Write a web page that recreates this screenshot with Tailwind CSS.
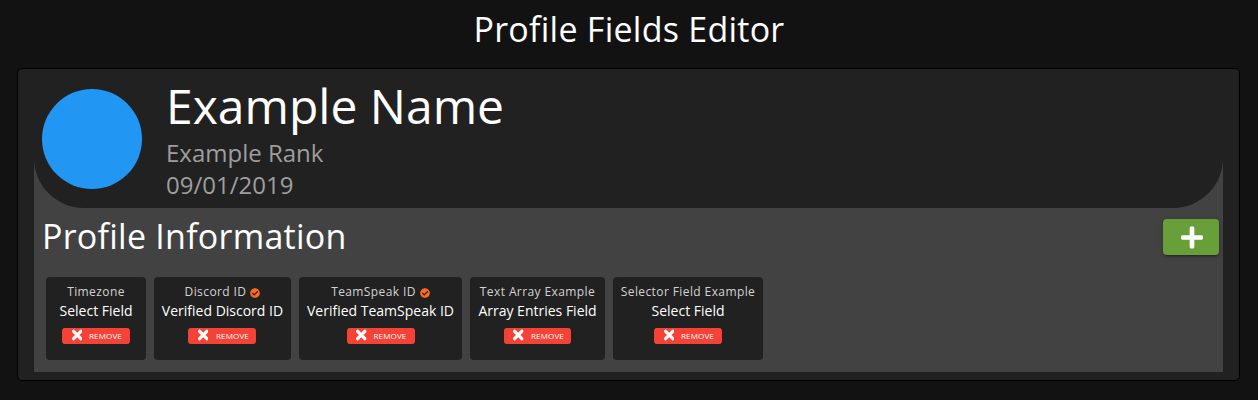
<!DOCTYPE html>
<html lang="en"><head><meta charset="utf-8"><title>Profile Fields Editor</title>
<script src="https://cdn.jsdelivr.net/npm/@tailwindcss/browser@4"></script></head>
<body class="h-[400px] overflow-hidden bg-[#121212] px-[17px] pt-[9px] font-['Open_Sans',sans-serif] text-white">
<svg class="hidden">
<symbol id="times" viewBox="0 0 352 512"><path stroke="white" stroke-width="18" d="M242.72 256l100.07-100.07c12.28-12.28 12.28-32.19 0-44.48l-22.24-22.24c-12.28-12.28-32.19-12.28-44.48 0L176 189.28 75.93 89.21c-12.28-12.28-32.19-12.28-44.48 0L9.21 111.45c-12.28 12.28-12.28 32.19 0 44.48L109.28 256 9.21 356.07c-12.28 12.28-12.28 32.19 0 44.48l22.24 22.24c12.28 12.28 32.2 12.28 44.48 0L176 322.72l100.07 100.07c12.28 12.28 32.2 12.28 44.48 0l22.24-22.24c12.28-12.28 12.28-32.19 0-44.48L242.72 256z"/></symbol>
<symbol id="check" viewBox="0 0 512 512"><path d="M504 256c0 137-111 248-248 248S8 393 8 256 119 8 256 8s248 111 248 248zM227.3 387.300l184-184c6.200-6.200 6.200-16.400 0-22.600l-22.600-22.600c-6.200-6.200-16.400-6.200-22.600 0L216 308.100l-70.100-70.100c-6.200-6.200-16.400-6.200-22.600 0l-22.600 22.600c-6.200 6.200-6.200 16.400 0 22.600l104 104c6.200 6.200 16.400 6.200 22.600 0z"/></symbol>
</svg>
<h1 class="h-10 text-center text-[34px] leading-10 tracking-[0.25px]">Profile Fields Editor</h1>
<main class="mt-[19px] h-[313px] w-[1223px] rounded-[5px] border border-black bg-[#212121] p-4">
<div class="h-[287px] w-[1189px] bg-[#424242]">
<header class="flex h-[123px] rounded-b-[50px] bg-[#212121] pl-2 pt-1">
<div class="size-[100px] shrink-0 rounded-full bg-[#2196f3]"></div>
<div class="ml-6 -mt-[7px]">
<h2 class="h-12 whitespace-nowrap text-[48px] leading-[48px]">Example Name</h2>
<div class="mt-[7px] text-2xl leading-8 text-[#9e9e9e]">Example Rank</div>
<div class="text-2xl leading-8 text-[#9e9e9e]">09/01/2019</div>
</div>
</header>
<div class="flex h-[69px] justify-between pl-2 pr-1 pt-2">
<h2 class="text-[34px] leading-10 tracking-[0.25px]">Profile Information</h2>
<button class="mt-[3px] flex h-9 w-14 items-center justify-center rounded bg-[#689f38] pl-px shadow-[0_3px_1px_-2px_rgba(0,0,0,.2),0_2px_2px_rgba(0,0,0,.14),0_1px_5px_rgba(0,0,0,.12)]" aria-label="Add">
<svg class="h-[25px] w-[22px]" viewBox="0 0 448 512" fill="white"><path d="M416 208H272V64c0-17.670-14.330-32-32-32h-32c-17.670 0-32 14.330-32 32v144H32c-17.670 0-32 14.330-32 32v32c0 17.670 14.330 32 32 32h144v144c0 17.670 14.330 32 32 32h32c17.670 0 32-14.330 32-32V304h144c17.670 0 32-14.330 32-32v-32c0-17.670-14.330-32-32-32z"/></svg></button>
</div>
<div class="flex gap-2 pl-3">
<section class="flex h-[83px] w-[100px] flex-col items-center rounded bg-[#212121] pt-[5px] whitespace-nowrap">
<div class="text-xs leading-5 tracking-[0.4px] text-[#d3d3d3]">Timezone</div>
<div class="text-sm leading-[18px]">Select Field</div>
<button class="mt-2 flex h-4 w-[68px] items-center rounded-[3px] bg-[#f44336] pl-[9.5px] text-[8px] font-medium"><svg class="mb-0.5 h-4 w-[10.5px]" fill="white"><use href="#times"/></svg><span class="ml-[7px] tracking-[0.15px]">REMOVE</span></button>
</section>
<section class="flex h-[83px] w-[137px] flex-col items-center rounded bg-[#212121] pt-[5px] whitespace-nowrap">
<div class="flex items-center gap-1 text-xs leading-5 tracking-[0.4px] text-[#d3d3d3]">Discord ID<svg class="mt-0.5 size-2.5" fill="#ff6a20"><use href="#check"/></svg></div>
<div class="text-sm leading-[18px]">Verified Discord ID</div>
<button class="mt-2 mr-px flex h-4 w-[68px] items-center rounded-[3px] bg-[#f44336] pl-[9.5px] text-[8px] font-medium"><svg class="mb-0.5 h-4 w-[10.5px]" fill="white"><use href="#times"/></svg><span class="ml-2 tracking-[0.15px]">REMOVE</span></button>
</section>
<section class="flex h-[83px] w-[163px] flex-col items-center rounded bg-[#212121] pt-[5px] whitespace-nowrap">
<div class="flex items-center gap-1 text-xs leading-5 tracking-[0.4px] text-[#d3d3d3]">TeamSpeak ID<svg class="mt-0.5 size-2.5" fill="#ff6a20"><use href="#check"/></svg></div>
<div class="text-sm leading-[18px]">Verified TeamSpeak ID</div>
<button class="mt-2 flex h-4 w-[68px] items-center rounded-[3px] bg-[#f44336] pl-[9.5px] text-[8px] font-medium"><svg class="mb-0.5 h-4 w-[10.5px]" fill="white"><use href="#times"/></svg><span class="ml-[7px] tracking-[0.15px]">REMOVE</span></button>
</section>
<section class="flex h-[83px] w-[135px] flex-col items-center rounded bg-[#212121] pt-[5px] whitespace-nowrap">
<div class="text-xs leading-5 tracking-[0.4px] text-[#d3d3d3]">Text Array Example</div>
<div class="text-sm leading-[18px]">Array Entries Field</div>
<button class="mt-2 flex h-4 w-[67px] items-center rounded-[3px] bg-[#f44336] pl-[9px] text-[8px] font-medium"><svg class="mb-0.5 h-4 w-[10.5px]" fill="white"><use href="#times"/></svg><span class="ml-[7.5px] tracking-[0.15px]">REMOVE</span></button>
</section>
<section class="flex h-[83px] w-[150px] flex-col items-center rounded bg-[#212121] pt-[5px] whitespace-nowrap">
<div class="text-xs leading-5 tracking-[0.4px] text-[#d3d3d3]">Selector Field Example</div>
<div class="text-sm leading-[18px]">Select Field</div>
<button class="mt-2 flex h-4 w-[68px] items-center rounded-[3px] bg-[#f44336] pl-[9.5px] text-[8px] font-medium"><svg class="mb-0.5 h-4 w-[10.5px]" fill="white"><use href="#times"/></svg><span class="ml-[7px] tracking-[0.15px]">REMOVE</span></button>
</section>
</div>
</div>
</main>
</body></html>
